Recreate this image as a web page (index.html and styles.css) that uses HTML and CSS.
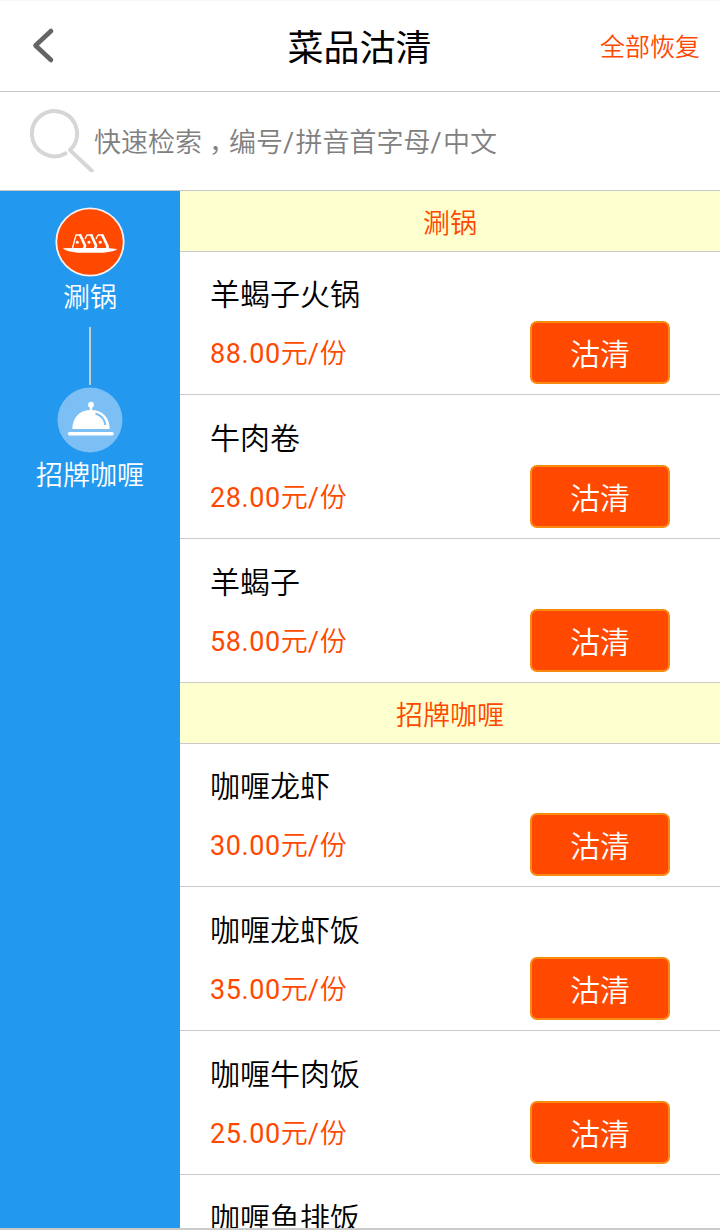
FILE: index.html
```html
<!DOCTYPE html>
<html lang="zh-CN">
<head>
<meta charset="utf-8">
<title>菜品沽清</title>
<link rel="stylesheet" href="styles.css">
</head>
<body>
<div class="app">
  <header class="header">
    <svg class="back" width="28" height="40" viewBox="0 0 28 40"><path d="M21 5 L5.500 19.500 L21 34" fill="none" stroke="#646464" stroke-width="4.600" stroke-linecap="round" stroke-linejoin="round"/></svg>
    <h1 class="title">菜品沽清</h1>
    <a class="restore">全部恢复</a>
  </header>
  <div class="search">
    <svg class="search-icon" width="66" height="64" viewBox="0 0 66 64" fill="none" stroke="#d6d6d6" stroke-width="4"><path d="M35.500 45.400 A22.600 22.600 0 1 1 40 42.100 L62 63" stroke-linecap="round" stroke-linejoin="round"/></svg>
    <span class="placeholder">快速检索<span class="comma">，</span>编号<span class="slash">/</span>拼音首字母<span class="slash">/</span>中文</span>
  </div>
  <div class="main">
    <nav class="side">
      <svg class="hotpot" width="70" height="70" viewBox="0 0 70 70">
        <circle cx="35" cy="35" r="33.700" fill="#ff4800" stroke="#f5f1f2" stroke-width="1.800"/>
        <path d="M7.700 41.300 L18 41 H52 L62.300 42 Q60 44.500 48 45.700 H23 Q12 45 7.700 41.300Z" fill="#fff"/>
        <g fill="none" stroke="#fff" stroke-width="1.300" stroke-linejoin="round"><path d="M17.500 41 L21 28 H26"/><path d="M30 32 L32 28 H37.500"/><path d="M41 32 L43 28 H48"/></g>
        <g fill="none" stroke="#fff" stroke-width="2.700"><path d="M25 27.500 L30 38.500 L29 42"/><path d="M36 27.500 L41 38.500 L40 42"/><path d="M47 27.500 L52.500 39 V42"/></g>
        <g fill="#fff"><circle cx="22.300" cy="35.300" r="1.500"/><circle cx="34" cy="35.300" r="1.500"/><circle cx="45.300" cy="35.300" r="1.500"/></g>
      </svg>
      <span class="side-label">涮锅</span>
      <span class="link-line"></span>
      <svg class="cloche" width="66" height="66" viewBox="0 0 66 66">
        <circle cx="33" cy="33" r="32.500" fill="#7bbff5"/>
        <g fill="#fff"><circle cx="34" cy="17.700" r="2.900"/><path d="M32.800 19 H35.200 V24 H32.800Z"/><path d="M15.300 42 C15.500 30 23 23 34 23 C45 23 52.500 30 52.700 42Z"/><rect x="10.800" y="45" width="46" height="3.400" rx="1.700"/></g>
        <path d="M38.500 26.500 Q47.500 29.500 48.200 38" fill="none" stroke="#7bbff5" stroke-width="2"/>
      </svg>
      <span class="side-label">招牌咖喱</span>
    </nav>
    <div class="list">
      <h2 class="section">涮锅</h2>
      <div class="item"><span class="name">羊蝎子火锅</span><span class="price"><span class="num">88.00</span>元<span class="per">/</span>份</span><button class="btn">沽清</button></div>
      <div class="item"><span class="name">牛肉卷</span><span class="price"><span class="num">28.00</span>元<span class="per">/</span>份</span><button class="btn">沽清</button></div>
      <div class="item"><span class="name">羊蝎子</span><span class="price"><span class="num">58.00</span>元<span class="per">/</span>份</span><button class="btn">沽清</button></div>
      <h2 class="section">招牌咖喱</h2>
      <div class="item"><span class="name">咖喱龙虾</span><span class="price"><span class="num">30.00</span>元<span class="per">/</span>份</span><button class="btn">沽清</button></div>
      <div class="item"><span class="name">咖喱龙虾饭</span><span class="price"><span class="num">35.00</span>元<span class="per">/</span>份</span><button class="btn">沽清</button></div>
      <div class="item"><span class="name">咖喱牛肉饭</span><span class="price"><span class="num">25.00</span>元<span class="per">/</span>份</span><button class="btn">沽清</button></div>
      <div class="item"><span class="name">咖喱鱼排饭</span></div>
    </div>
  </div>
</div>
</body>
</html>
```

FILE: styles.css
```css
* { box-sizing: border-box; }
body { margin: 0; background: #fff; font-family: Roboto, "Noto Sans CJK SC", sans-serif; font-weight: 350; }
.app { width: 720px; height: 1230px; display: flex; flex-direction: column; overflow: hidden; border-bottom: 2px solid #cacaca; }
.header { height: 92px; flex: none; display: grid; grid-template-columns: 200px 1fr 200px; align-items: center; padding: 0 20px 0 30px; border-bottom: 1px solid #c8c8c8; border-top: 1px solid #f7f7f7; }
.back { display: block; }
.title { margin: 5px 0 0 -11px; font-size: 36px; line-height: 50px; font-weight: 400; text-align: center; color: #000; }
.restore { font-size: 25px; line-height: 36px; text-align: right; color: #ff4800; margin-top: 3px; }
.search { height: 99px; flex: none; display: flex; align-items: center; padding: 0 30px; border-bottom: 1px solid #c8c8c8; }
.search-icon { display: block; flex: none; margin: -2px -2px 0 0; }
.placeholder { font-size: 27px; line-height: 40px; color: #808080; margin-top: 3px; white-space: nowrap; }
.comma { margin: 0 -7px 0 7px; }
.slash { letter-spacing: 1.3px; font-weight: 400; }
.main { flex: 1; min-height: 0; display: flex; overflow: hidden; }
.side { width: 180px; flex: none; background: #2398ef; display: flex; flex-direction: column; align-items: center; padding-top: 16px; }
.hotpot, .cloche { display: block; flex: none; }
.side-label { font-size: 27px; line-height: 40px; color: #fff; margin-top: 1px; }
.link-line { width: 2px; height: 58px; background: #c8ccd0; margin: 9px 0 2px; }
.cloche + .side-label { margin-top: 3px; }
.list { flex: 1; }
.section { margin: 0; height: 61px; display: flex; align-items: center; justify-content: center; padding-top: 5px; background: #fdffce; border-bottom: 1px solid #cacaca; color: #ff4800; font-size: 27px; font-weight: 350; line-height: 40px; }
.item { height: 144px; padding: 21px 50px 10px 30px; display: grid; grid-template-columns: 1fr 140px; grid-template-rows: 49px 63px; border-bottom: 1px solid #cacaca; }
.section + .item { height: 143px; padding-top: 20px; }
.name { grid-column: 1 / 3; font-size: 30px; line-height: 46px; color: #000; }
.price { font-size: 27px; line-height: 40px; color: #ff4800; margin-top: 13px; white-space: nowrap; }
.num { letter-spacing: 0.6px; font-weight: 400; }
.per { font-weight: 400; letter-spacing: 0.8px; }
.btn { width: 140px; height: 63px; padding: 5px 0 0; border: 2px solid #f98a10; border-radius: 7px; background: #ff4800; color: #fff; font: 350 30px/44px Roboto, "Noto Sans CJK SC", sans-serif; }
```
